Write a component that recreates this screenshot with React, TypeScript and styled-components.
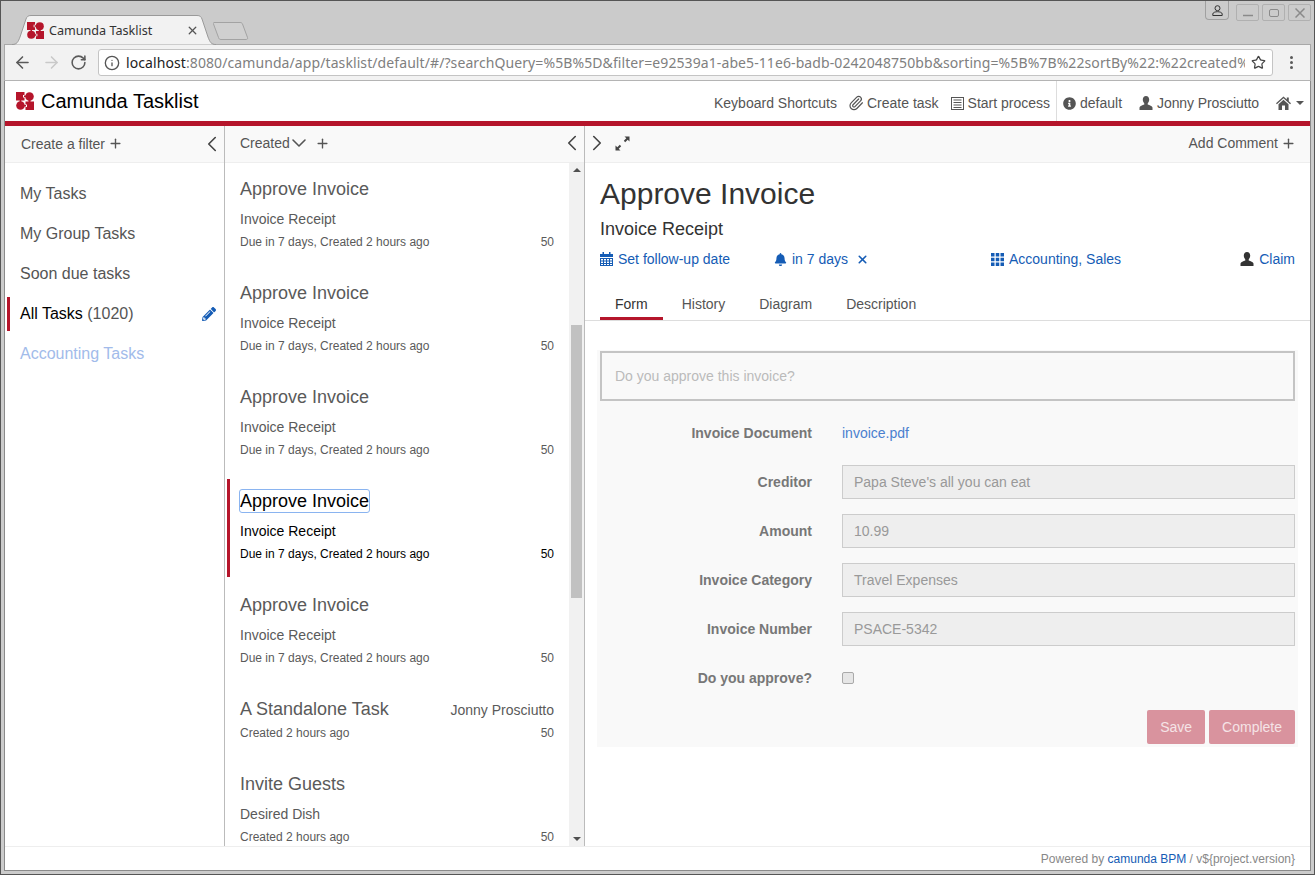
import styled, { createGlobalStyle } from "styled-components";
import {
  ArrowLeft,
  ArrowRight,
  ChevronDown,
  ChevronLeft,
  ChevronRight,
  Info,
  Paperclip,
  Plus,
  RotateCw,
  Star,
  X,
} from "lucide-react";
import { FaBell, FaInfoCircle, FaPencilAlt } from "react-icons/fa";

interface Task {
  title: string;
  subtitle?: string;
  meta: string;
  assignee?: string;
  selected?: boolean;
}

const approve: Task = {
  title: "Approve Invoice",
  subtitle: "Invoice Receipt",
  meta: "Due in 7 days, Created 2 hours ago",
};

const tasks: Task[] = [
  approve,
  approve,
  approve,
  { ...approve, selected: true },
  approve,
  { title: "A Standalone Task", meta: "Created 2 hours ago", assignee: "Jonny Prosciutto" },
  { title: "Invite Guests", subtitle: "Desired Dish", meta: "Created 2 hours ago" },
];

const fields = [
  { label: "Creditor", value: "Papa Steve's all you can eat" },
  { label: "Amount", value: "10.99" },
  { label: "Invoice Category", value: "Travel Expenses" },
  { label: "Invoice Number", value: "PSACE-5342" },
];

const Logo = ({ size }: { size: number }) => (
  <svg width={size} height={size} viewBox="0 0 18 18" fill="#b5152b">
    <path d="M0 0h8.500v3H7v2.500h1.500v3H0z" />
    <circle cx="13.500" cy="4.500" r="4.300" />
    <circle cx="4.500" cy="13.500" r="4.300" />
    <path d="M9.500 9.500H18V18H9.500v-3H11v-2.500H9.500z" />
    <path d="M8 3.500h2v1.500H8zM12.500 8h2v2h-2zM8 13h2v1.500H8zM3.700 8h1.600v2H3.700z" />
  </svg>
);

const UserIcon = ({ color = "#555" }: { color?: string }) => (
  <svg width="14" height="14" viewBox="0 0 14 14" fill={color}>
    <path d="M7 0c2 0 3.200 1.500 3.200 3.600 0 1.600-.7 3-1.500 3.800v1.200c1.800.7 4.600 1.300 4.800 3V14H.5v-2.400c.2-1.700 3-2.300 4.800-3V7.400C4.500 6.600 3.800 5.200 3.800 3.600 3.800 1.500 5 0 7 0z" />
  </svg>
);

const HomeIcon = () => (
  <svg width="15" height="14" viewBox="0 0 15 14" fill="#555">
    <path d="M7.500 .5 10.800 3.500V1.500h2v3.800L15 7.300l-.9.900-6.600-6-6.600 6L0 7.300z" />
    <path d="M2.500 8.200 7.500 3.700l5 4.500V14H9V9.500H6V14H2.500z" />
  </svg>
);

const ListIcon = () => (
  <svg width="13" height="13" viewBox="0 0 13 13" fill="none" stroke="#555">
    <rect x="0.500" y="0.500" width="12" height="12" />
    <path d="M2.500 3h8M2.500 5.500h8M2.500 8h8M2.500 10.500h8" strokeWidth="1.200" />
  </svg>
);

const CalendarIcon = () => (
  <svg width="13" height="14" viewBox="0 0 13 14" fill="#155cb5">
    <path d="M0 2h2.500V0h1.500v2h5V0h1.500v2H13v3H0z" />
    <path
      fillRule="evenodd"
      d="M0 6h13v8H0zM1 7v1.500h2V7zM4 7v1.500h2V7zM7 7v1.500h2V7zM10 7v1.500h2V7zM1 9.500V11h2V9.500zM4 9.500V11h2V9.500zM7 9.500V11h2V9.500zM10 9.500V11h2V9.500zM1 12v1h2v-1zM4 12v1h2v-1zM7 12v1h2v-1zM10 12v1h2v-1z"
    />
  </svg>
);

const GridIcon = () => (
  <svg width="13" height="13" viewBox="0 0 13 13" fill="#155cb5">
    <path d="M0 0h3.500v3.500H0zM4.750 0h3.500v3.500h-3.500zM9.500 0H13v3.500H9.500zM0 4.750h3.500v3.500H0zM4.750 4.750h3.500v3.500h-3.500zM9.500 4.750H13v3.500H9.500zM0 9.500h3.500V13H0zM4.750 9.500h3.500V13h-3.500zM9.500 9.500H13V13H9.500z" />
  </svg>
);

const ExpandIcon = () => (
  <svg width="15" height="15" viewBox="0 0 15 15" fill="#444">
    <path d="M14.500 .5v5l-1.800-1.800-2.500 2.500-1.400-1.400 2.500-2.500L9.500.5z" />
    <path d="M.5 14.500v-5l1.800 1.800 2.500-2.500 1.400 1.400-2.500 2.500 1.800 1.800z" />
  </svg>
);

const App: React.FC = () => {
  return (
    <Window>
      <GlobalStyle />
      <TitleBar>
        <Tab>
          <TabShape viewBox="0 0 204 30" preserveAspectRatio="none">
            <path d="M0 29.500C5 29.500 6 27 8 22L14 4C15 1.500 16 .5 19 .5H185C188 .5 189 1.500 190 4L196 22C198 27 199 29.500 204 29.500" fill="#f2f2f2" stroke="#9a9a9a" />
          </TabShape>
          <TabInner>
            <Logo size={17} />
            <TabTitle>Camunda Tasklist</TabTitle>
            <X size={13} color="#555" strokeWidth={2.400} />
          </TabInner>
        </Tab>
        <NewTab viewBox="0 0 36 18">
          <path d="M1 .5H27C28.500.5 29 1 29.500 2L34.500 15.500C35 17 34 17.500 33 17.500H8C6.500 17.500 6 17 5.500 15.500L.5 2C0 1 .5.5 1 .5Z" fill="#d0d0d0" stroke="#a3a3a3" />
        </NewTab>
        <Controls>
          <ProfileButton>
            <svg width="11" height="11" viewBox="0 0 11 11" fill="none" stroke="#333">
              <circle cx="5.500" cy="3.200" r="2.500" />
              <path d="M.8 10.500V9c0-1.500 2.500-2.300 4.700-2.300s4.700.8 4.700 2.300v1.500z" />
            </svg>
          </ProfileButton>
          <ControlGroup>
            <ControlButton>
              <svg width="10" height="10" viewBox="0 0 10 10" stroke="#8a8a8a" strokeWidth="1.500"><path d="M0 7.500h10" /></svg>
            </ControlButton>
            <ControlButton>
              <svg width="10" height="10" viewBox="0 0 10 10" fill="none" stroke="#8a8a8a"><rect x=".5" y="1.500" width="9" height="7" rx="1.500" /></svg>
            </ControlButton>
            <ControlButton>
              <svg width="10" height="10" viewBox="0 0 10 10" stroke="#8a8a8a" strokeWidth="1.500"><path d="M.5.5l9 9M9.500.5l-9 9" /></svg>
            </ControlButton>
          </ControlGroup>
        </Controls>
      </TitleBar>

      <BrowserBar>
        <ArrowLeft size={19} color="#5a5a5a" strokeWidth={2} />
        <ForwardSlot>
          <ArrowRight size={19} color="#c9c9c9" strokeWidth={2} />
        </ForwardSlot>
        <ReloadSlot>
          <RotateCw size={17} color="#5a5a5a" strokeWidth={2.200} />
        </ReloadSlot>
        <Omnibox>
          <Info size={16} color="#555" />
          <Url>
            <b>localhost</b>:8080/camunda/app/tasklist/default/#/?searchQuery=%5B%5D&amp;filter=e92539a1-abe5-11e6-badb-0242048750bb&amp;sorting=%5B%7B%22sortBy%22:%22created%22,%22sortOrder%22
          </Url>
          <Star size={15} color="#444" strokeWidth={2} />
        </Omnibox>
        <MenuDots>
          <i />
          <i />
          <i />
        </MenuDots>
      </BrowserBar>

      <Page>
        <Header>
          <Brand>
            <Logo size={18} />
            <BrandName>Camunda Tasklist</BrandName>
          </Brand>
          <HeaderGroup>
            <HeaderItem>Keyboard Shortcuts</HeaderItem>
            <HeaderItem>
              <ClipIcon size={16} />
              Create task
            </HeaderItem>
            <HeaderItem>
              <ListIcon />
              Start process
            </HeaderItem>
          </HeaderGroup>
          <HeaderGroupRight>
            <HeaderItem>
              <FaInfoCircle size={13} color="#555" />
              default
            </HeaderItem>
            <UserItem>
              <UserIcon />
              Jonny Prosciutto
            </UserItem>
            <HeaderItem>
              <HomeIcon />
              <Caret />
            </HeaderItem>
          </HeaderGroupRight>
        </Header>

        <Columns>
          <FilterColumn>
            <ColumnBar>
              <BarLabel>Create a filter</BarLabel>
              <FilterPlus size={15} />
              <BarEnd>
                <BarChevronLeft size={26} />
              </BarEnd>
            </ColumnBar>
            <FilterList>
              <FilterItem>My Tasks</FilterItem>
              <FilterItem>My Group Tasks</FilterItem>
              <FilterItem>Soon due tasks</FilterItem>
              <FilterItem $active>
                All Tasks&nbsp;<Count>(1020)</Count>
                <PencilSlot>
                  <FaPencilAlt size={14} color="#155cb5" />
                </PencilSlot>
              </FilterItem>
              <FilterItem $muted>Accounting Tasks</FilterItem>
            </FilterList>
          </FilterColumn>

          <ListColumn>
            <ColumnBar $left={15} $raised>
              <BarLabel>Created</BarLabel>
              <SortChevron size={24} />
              <PlusSlot>
                <BarPlus size={15} />
              </PlusSlot>
              <BarEnd>
                <BarChevronLeft size={26} />
              </BarEnd>
            </ColumnBar>
            <ListBody>
              <TaskList>
                {tasks.map((task, index) => (
                  <TaskItem key={index} $selected={task.selected}>
                    <TitleRow>
                      <TaskTitle $selected={task.selected}>{task.title}</TaskTitle>
                      {task.assignee && <Assignee>{task.assignee}</Assignee>}
                    </TitleRow>
                    {task.subtitle && <TaskSubtitle>{task.subtitle}</TaskSubtitle>}
                    <MetaRow $tight={!task.subtitle}>
                      <span>{task.meta}</span>
                      <span>50</span>
                    </MetaRow>
                  </TaskItem>
                ))}
              </TaskList>
              <Scrollbar>
                <ScrollUp />
                <ScrollThumb />
                <ScrollDown />
              </Scrollbar>
            </ListBody>
          </ListColumn>

          <DetailColumn>
            <ColumnBar $left={3} $raised>
              <BarChevronRight size={26} />
              <ExpandSlot>
                <ExpandIcon />
              </ExpandSlot>
              <BarEnd>
                <AddComment>
                  Add Comment
                  <BarPlus size={15} />
                </AddComment>
              </BarEnd>
            </ColumnBar>
            <DetailHead>
              <DetailTitle>Approve Invoice</DetailTitle>
              <DetailSubtitle>Invoice Receipt</DetailSubtitle>
              <LinkRow>
                <BlueLink>
                  <CalendarIcon />
                  Set follow-up date
                </BlueLink>
                <BlueLink>
                  <FaBell size={13} />
                  in 7 days
                  <ClearSlot>
                    <X size={13} strokeWidth={3} />
                  </ClearSlot>
                </BlueLink>
                <BlueLink>
                  <GridIcon />
                  Accounting, Sales
                </BlueLink>
                <BlueLink>
                  <UserIcon color="#333" />
                  Claim
                </BlueLink>
              </LinkRow>
            </DetailHead>
            <Tabs>
              <TabLink $active>Form</TabLink>
              <TabLink>History</TabLink>
              <TabLink>Diagram</TabLink>
              <TabLink>Description</TabLink>
            </Tabs>
            <FormPanel>
              <Legend>Do you approve this invoice?</Legend>
              <FormRow>
                <FieldLabel>Invoice Document</FieldLabel>
                <DocLink>invoice.pdf</DocLink>
              </FormRow>
              {fields.map((field) => (
                <FormRow key={field.label}>
                  <FieldLabel>{field.label}</FieldLabel>
                  <FieldValue>{field.value}</FieldValue>
                </FormRow>
              ))}
              <FormRow>
                <FieldLabel>Do you approve?</FieldLabel>
                <Check />
              </FormRow>
              <Actions>
                <ActionButton>Save</ActionButton>
                <ActionButton>Complete</ActionButton>
              </Actions>
            </FormPanel>
          </DetailColumn>
        </Columns>

        <Footer>
          Powered by&nbsp;<FooterLink>camunda BPM</FooterLink>&nbsp;/ v${"{"}project.version{"}"}
        </Footer>
      </Page>
    </Window>
  );
};

export default App;

const GlobalStyle = createGlobalStyle`
  html, body {
    margin: 0;
    padding: 0;
    overflow: hidden;
  }
  body {
    font-family: "Liberation Sans", Arial, sans-serif;
    font-size: 14px;
    color: #333;
  }
  * {
    box-sizing: border-box;
  }
`;

const Window = styled.div`
  width: 1315px;
  height: 875px;
  display: flex;
  flex-direction: column;
  background: #cbcbcb;
  border: 1px solid #555;
  padding: 0 3px 3px 3px;
  overflow: hidden;
`;

const TitleBar = styled.div`
  height: 43px;
  flex: none;
  display: flex;
  align-items: flex-end;
  padding-left: 8px;
`;

const Tab = styled.div`
  position: relative;
  width: 204px;
  height: 30px;
  margin-bottom: -1px;
`;

const TabShape = styled.svg`
  position: absolute;
  inset: 0;
  width: 100%;
  height: 100%;
`;

const TabInner = styled.div`
  position: relative;
  display: flex;
  align-items: center;
  height: 100%;
  padding: 0 17px 0 15px;
`;

const TabTitle = styled.span`
  flex: 1;
  margin-left: 5px;
  font-family: "Noto Sans", sans-serif;
  font-size: 12.6px;
  color: #333;
`;

const NewTab = styled.svg`
  width: 36px;
  height: 18px;
  margin: 0 0 4px -3px;
`;

const Controls = styled.div`
  display: flex;
  align-self: flex-start;
  margin-left: auto;
`;

const ProfileButton = styled.div`
  width: 24px;
  height: 19px;
  margin-right: 7px;
  display: flex;
  align-items: center;
  justify-content: center;
  border: 1px solid #a0a0a0;
  border-top: none;
  border-radius: 0 0 4px 4px;
`;

const ControlGroup = styled.div`
  display: flex;
  gap: 3px;
  padding-top: 3px;
`;

const ControlButton = styled.div`
  width: 23px;
  height: 17px;
  display: flex;
  align-items: center;
  justify-content: center;
  border: 1px solid #b0b0b0;
  border-radius: 2px;
`;

const BrowserBar = styled.div`
  height: 37px;
  flex: none;
  display: flex;
  align-items: center;
  padding-left: 8px;
  background: #f2f2f2;
  border: 1px solid #a8a8a8;
  border-bottom-color: #b4b4b4;
`;

const ForwardSlot = styled.span`
  display: flex;
  margin-left: 10px;
`;

const ReloadSlot = styled.span`
  display: flex;
  margin: 0 11px 0 9px;
`;

const Omnibox = styled.div`
  width: 1175px;
  height: 27px;
  flex: none;
  display: flex;
  align-items: center;
  padding: 0 6px 0 5px;
  background: #fff;
  border: 1px solid #c4c4c4;
  border-radius: 3px;
`;

const Url = styled.div`
  flex: 1;
  min-width: 0;
  margin: 0 6px;
  overflow: hidden;
  white-space: nowrap;
  font-family: "Noto Sans", sans-serif;
  font-size: 14px;
  letter-spacing: 0.09px;
  color: #808080;
  b {
    font-weight: 400;
    color: #222;
  }
`;

const MenuDots = styled.div`
  display: flex;
  flex-direction: column;
  gap: 2px;
  margin-left: 17px;
  i {
    width: 3px;
    height: 3px;
    border-radius: 50%;
    background: #5a5a5a;
  }
`;

const Page = styled.div`
  flex: 1;
  min-height: 0;
  display: flex;
  flex-direction: column;
  background: #fff;
  border: 1px solid #8a8a8a;
  border-top: none;
`;

const Header = styled.div`
  height: 45px;
  flex: none;
  display: flex;
  background: #fff;
  border-bottom: 5px solid #b5152b;
`;

const Brand = styled.div`
  display: flex;
  align-items: center;
  padding-left: 11px;
`;

const BrandName = styled.span`
  margin-left: 7px;
  font-size: 20px;
  color: #000;
`;

const HeaderGroup = styled.div`
  display: flex;
  align-items: center;
  gap: 12px;
  margin-left: auto;
  padding: 4px 6px 0 0;
`;

const HeaderGroupRight = styled(HeaderGroup)`
  margin-left: 0;
  gap: 17px;
  padding-left: 6px;
  padding-right: 6px;
  border-left: 1px solid #ddd;
`;

const HeaderItem = styled.span`
  display: flex;
  align-items: center;
  gap: 4px;
  font-size: 14px;
  color: #555;
`;

const UserItem = styled(HeaderItem)`
  letter-spacing: -0.1px;
`;

const ClipIcon = styled(Paperclip)`
  margin: -1px;
  color: #555;
  stroke-width: 1.8;
`;

const Caret = styled.span`
  width: 0;
  height: 0;
  margin-left: 1px;
  border-top: 4px solid #555;
  border-left: 4px solid transparent;
  border-right: 4px solid transparent;
`;

const Columns = styled.div`
  flex: 1;
  min-height: 0;
  display: flex;
`;

const FilterColumn = styled.div`
  width: 220px;
  flex: none;
  border-right: 1px solid #bbb;
`;

const ListColumn = styled.div`
  width: 360px;
  flex: none;
  display: flex;
  flex-direction: column;
  border-right: 1px solid #bbb;
`;

const DetailColumn = styled.div`
  flex: 1;
  min-width: 0;
`;

const ColumnBar = styled.div<{ $left?: number; $raised?: boolean }>`
  height: 37px;
  flex: none;
  display: flex;
  align-items: center;
  padding: 0 3px ${(p) => (p.$raised ? 2 : 0)}px ${(p) => p.$left ?? 16}px;
  background: #f9f9f9;
  border-bottom: 1px solid #eee;
`;

const BarLabel = styled.span`
  font-size: 14px;
  color: #555;
`;

const BarEnd = styled.span`
  display: flex;
  margin-left: auto;
`;

const BarPlus = styled(Plus)`
  margin-left: 3px;
  color: #555;
  stroke-width: 2.2;
`;

const FilterPlus = styled(BarPlus)`
  margin-bottom: 2px;
`;

const BarChevronLeft = styled(ChevronLeft)`
  margin: -4px;
  color: #444;
  stroke-width: 1.5;
`;

const BarChevronRight = styled(ChevronRight)`
  margin: -4px;
  color: #444;
  stroke-width: 1.5;
`;

const SortChevron = styled(ChevronDown)`
  margin: -3px;
  color: #555;
  stroke-width: 1.6;
`;

const PlusSlot = styled.span`
  display: flex;
  margin-left: 4px;
`;

const ExpandSlot = styled.span`
  display: flex;
  margin-left: 9px;
`;

const AddComment = styled.span`
  display: flex;
  align-items: center;
  margin-right: 11px;
  font-size: 14px;
  color: #555;
`;

const FilterList = styled.div`
  display: flex;
  flex-direction: column;
  gap: 6px;
  padding: 14px 0 0 2px;
`;

const FilterItem = styled.div<{ $active?: boolean; $muted?: boolean }>`
  height: 34px;
  display: flex;
  align-items: center;
  padding-left: 10px;
  border-left: 3px solid ${(p) => (p.$active ? "#b5152b" : "transparent")};
  font-size: 16px;
  color: ${(p) => (p.$active ? "#000" : p.$muted ? "#a2bbea" : "#555")};
`;

const Count = styled.span`
  color: #555;
`;

const PencilSlot = styled.span`
  display: flex;
  margin-left: auto;
  margin-right: 8px;
`;

const ListBody = styled.div`
  flex: 1;
  min-height: 0;
  display: flex;
`;

const TaskList = styled.div`
  flex: 1;
  min-width: 0;
  overflow: hidden;
  padding: 4px 15px 0 2px;
`;

const TaskItem = styled.div<{ $selected?: boolean }>`
  margin-bottom: 6px;
  padding: 10px 0 13px 10px;
  border-left: 3px solid ${(p) => (p.$selected ? "#b5152b" : "transparent")};
  color: ${(p) => (p.$selected ? "#000" : "#5a5a5a")};
`;

const TitleRow = styled.div`
  display: flex;
  align-items: center;
  justify-content: space-between;
  height: 24px;
`;

const TaskTitle = styled.span<{ $selected?: boolean }>`
  font-size: 18px;
  line-height: 22px;
  ${(p) => p.$selected && "outline: 1px solid #8ab4f0; border-radius: 2px;"}
`;

const Assignee = styled.span`
  padding-top: 2px;
  font-size: 14px;
`;

const TaskSubtitle = styled.div`
  margin-top: 8px;
  font-size: 14px;
  line-height: 20px;
`;

const MetaRow = styled.div<{ $tight?: boolean }>`
  display: flex;
  justify-content: space-between;
  margin-top: ${(p) => (p.$tight ? 2 : 3)}px;
  font-size: 12px;
  line-height: 20px;
`;

const Scrollbar = styled.div`
  width: 15px;
  flex: none;
  display: flex;
  flex-direction: column;
  align-items: center;
  background: #f1f1f1;
`;

const ScrollUp = styled.span`
  width: 0;
  height: 0;
  margin-top: 5px;
  border-bottom: 4px solid #505050;
  border-left: 4px solid transparent;
  border-right: 4px solid transparent;
`;

const ScrollThumb = styled.div`
  width: 11px;
  height: 273px;
  margin-top: 153px;
  background: #c1c1c1;
`;

const ScrollDown = styled.span`
  width: 0;
  height: 0;
  margin-top: auto;
  margin-bottom: 5px;
  border-top: 4px solid #505050;
  border-left: 4px solid transparent;
  border-right: 4px solid transparent;
`;

const DetailHead = styled.div`
  padding: 13px 15px 0 15px;
`;

const DetailTitle = styled.div`
  font-size: 30px;
  line-height: 36px;
  color: #333;
`;

const DetailSubtitle = styled.div`
  margin-top: 5px;
  font-size: 18px;
  line-height: 24px;
  color: #333;
`;

const LinkRow = styled.div`
  display: grid;
  grid-template-columns: 174px 217px 1fr auto;
  margin-top: 8px;
  height: 20px;
`;

const BlueLink = styled.span`
  display: flex;
  align-items: center;
  gap: 5px;
  font-size: 14px;
  color: #155cb5;
`;

const ClearSlot = styled.span`
  display: flex;
  margin-left: 3px;
`;

const Tabs = styled.div`
  display: flex;
  height: 38px;
  margin-top: 14px;
  padding-left: 15px;
  border-bottom: 1px solid #ddd;
`;

const TabLink = styled.div<{ $active?: boolean }>`
  height: 37px;
  padding: 8px 15px 0 15px;
  margin-right: 4px;
  display: flex;
  align-items: center;
  font-size: 14px;
  color: ${(p) => (p.$active ? "#333" : "#555")};
  border-bottom: 3px solid ${(p) => (p.$active ? "#b5152b" : "transparent")};
`;

const FormPanel = styled.div`
  width: 701px;
  margin: 29px 0 0 12px;
  padding: 1px 3px 3px 3px;
  background: #f9f9f9;
`;

const Legend = styled.div`
  height: 50px;
  display: flex;
  align-items: center;
  padding-left: 13px;
  margin-bottom: 15px;
  border: 2px solid #c4c4c4;
  font-size: 14px;
  color: #bbb;
`;

const FormRow = styled.div`
  display: grid;
  grid-template-columns: 212px 453px;
  column-gap: 30px;
  align-items: center;
  height: 34px;
  margin-bottom: 15px;
`;

const FieldLabel = styled.div`
  text-align: right;
  font-size: 14px;
  font-weight: 700;
  color: #777;
`;

const DocLink = styled.span`
  font-size: 14px;
  color: #4a80cf;
`;

const FieldValue = styled.div`
  height: 34px;
  display: flex;
  align-items: center;
  padding-left: 11px;
  background: #eee;
  border: 1px solid #ccc;
  font-size: 14px;
  color: #999;
`;

const Check = styled.span`
  width: 12px;
  height: 12px;
  background: #e6e6e6;
  border: 1px solid #aaa;
  border-radius: 2px;
`;

const Actions = styled.div`
  display: flex;
  justify-content: flex-end;
  gap: 4px;
`;

const ActionButton = styled.div`
  height: 34px;
  display: flex;
  align-items: center;
  padding: 0 13px;
  background: #d9939e;
  border-radius: 2px;
  font-size: 14px;
  color: #f5e3e6;
`;

const Footer = styled.div`
  height: 24px;
  flex: none;
  display: flex;
  align-items: center;
  justify-content: flex-end;
  padding-right: 15px;
  background: #fff;
  border-top: 1px solid #eee;
  font-size: 12px;
  color: #888;
`;

const FooterLink = styled.span`
  color: #155cb5;
`;
